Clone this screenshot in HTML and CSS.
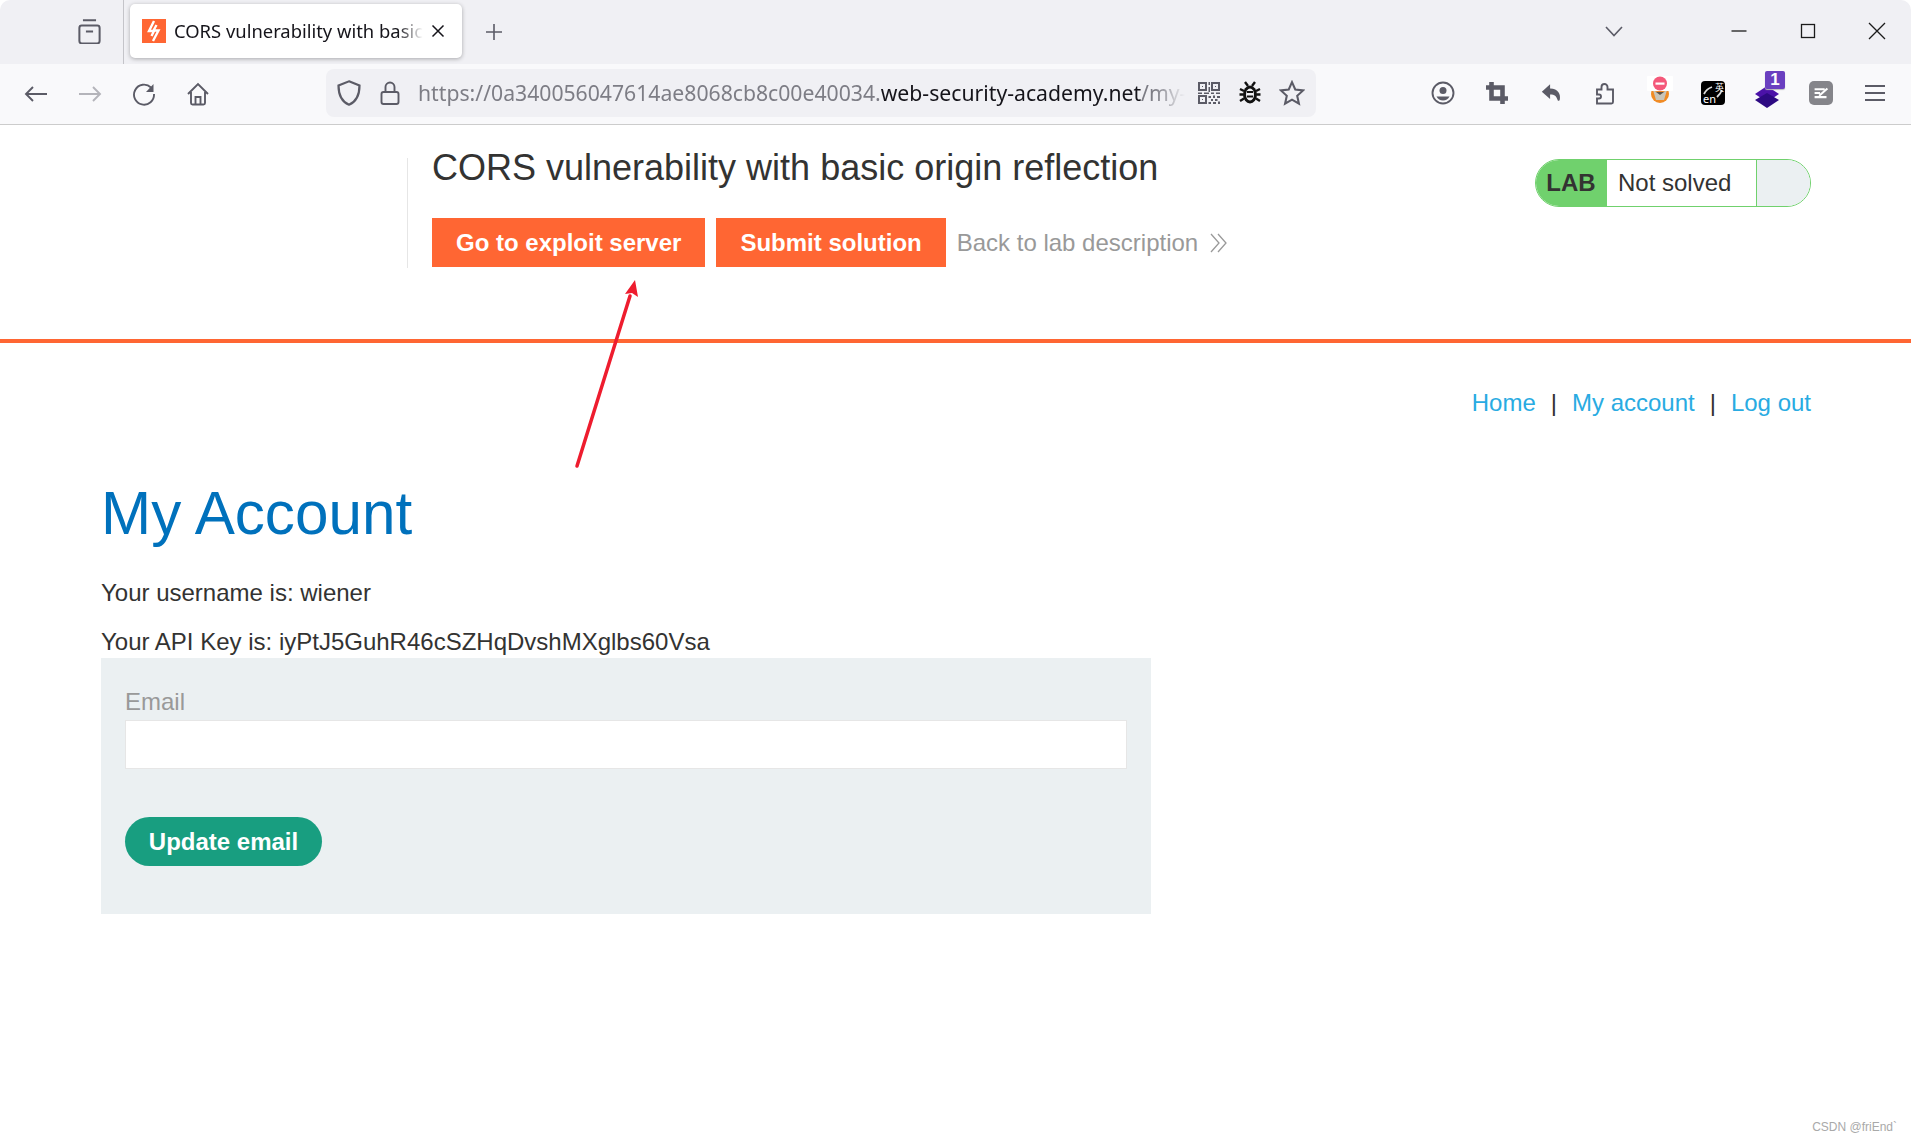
FILE: index.html
```html
<!DOCTYPE html>
<html lang="en">
<head>
<meta charset="utf-8">
<title>CORS vulnerability with basic origin reflection</title>
<link rel="stylesheet" href="styles.css">
</head>
<body>
<div class="window">
  <div class="tabbar">
    <svg class="ic archive" viewBox="2.5 1.5 19 21"><path d="M6.500 2.500h11M3.500 9a2 2 0 0 1 2-2h13a2 2 0 0 1 2 2v11a2 2 0 0 1-2 2h-13a2 2 0 0 1-2-2zM9 12h6"/></svg>
    <div class="tab-sep"></div>
    <div class="tab">
      <svg class="favicon" viewBox="0 0 24 24"><rect width="24" height="24" fill="#ff6633"/><path d="M12 2 L7 12 L12 12 L9.500 17 M14.500 6 L11.500 11.500 L16.500 11.500 L11 22" fill="none" stroke="#fff" stroke-width="2.400"/></svg>
      <span class="tab-title">CORS vulnerability with basic origin reflection</span>
      <svg class="ic tab-close" viewBox="0 0 14 14"><path d="M1.500 1.500l11 11M12.500 1.500l-11 11"/></svg>
    </div>
    <svg class="ic plus" viewBox="0 0 20 20"><path d="M10 2v16M2 10h16"/></svg>
    <svg class="ic chevron" viewBox="0 0 24 24"><path d="M4 8l8 8.500L20 8"/></svg>
    <svg class="ic win win-min" viewBox="0 0 24 24"><path d="M4.500 12h15"/></svg>
    <svg class="ic win" viewBox="0 0 24 24"><rect x="5.500" y="5.500" width="13" height="13"/></svg>
    <svg class="ic win" viewBox="0 0 24 24"><path d="M4 4l16 16M20 4L4 20"/></svg>
  </div>

  <div class="toolbar">
    <svg class="ic tool" viewBox="0 0 24 24"><path d="M23 12H2M9 5l-7 7 7 7"/></svg>
    <svg class="ic tool faded" viewBox="0 0 24 24"><path d="M1 12h21M15 5l7 7-7 7"/></svg>
    <svg class="ic tool" viewBox="0 0 24 24"><path d="M19 5.500A10 10 0 1 0 22 12"/><path class="solid" d="M21.500 2v8H14z"/></svg>
    <svg class="ic tool" viewBox="0 0 24 24"><path d="M2 12L12 2l10 10M5 10v11a1.500 1.500 0 0 0 1.500 1.500h11A1.500 1.500 0 0 0 19 21V10M9.500 22.500V15h5v7.500"/></svg>
    <div class="address">
      <svg class="ic shield" viewBox="0 0 24 24"><path d="M12 2l9 3.500c0 8-2 13.500-9 16.500-7-3-9-8.500-9-16.500z"/></svg>
      <svg class="ic lock" viewBox="0 0 24 24"><rect x="3.500" y="11" width="17" height="12" rx="2"/><path d="M7.500 11V6a4.500 4.500 0 0 1 9 0v5"/></svg>
      <span class="url"><span class="url-dim">https://0a340056047614ae8068cb8c00e40034.</span>web-security-academy.net<span class="url-dim">/my-account</span></span>
      <svg class="qr" viewBox="0 0 24 24"><path fill-rule="evenodd" d="M1 1h9v9H1zM3 3v5h5V3zM14 1h9v9h-9zM16 3v5h5V3zM1 14h9v9H1zM3 16v5h5v-5zM5 5h1v1H5zM18 5h1v1h-1zM5 18h1v1H5zM11.500 1h1.500v3h-1.500zM11.500 6h1.500v5h-1.500zM1 11.500h4V13H1zM7 11.500h5V13H7zM14 11.500h3V13h-3zM19 11.500h4V13h-4zM11.500 15H14v2h-2.500zM16 14.500h2v2.500h-2zM20 15h3v2h-3zM14 18h2v2h-2zM18 18h2.500v2H18zM11.500 21h2.500v2h-2.500zM16 21h3v2h-3zM21 20.500h2V23h-2z"/></svg>
      <svg class="bug" viewBox="0 0 24 24"><path d="M7 1l3 4M17 1l-3 4M2 8l4 2M22 8l-4 2M1.500 13.500h4M22.500 13.500h-4M2 20l4-2.500M22 20l-4-2.500"/><ellipse cx="12" cy="13.500" rx="7" ry="9" class="bug-body"/><ellipse cx="12" cy="13.500" rx="4" ry="6" class="bug-inner"/><path class="bug-lines" d="M9 11h6M9 15.500h6"/></svg>
      <svg class="ic star" viewBox="0 0 24 24"><path d="M12 2l3 6.800 7.300.8-5.500 5 1.600 7.300-6.400-3.800-6.400 3.800 1.600-7.300-5.500-5 7.300-.8z"/></svg>
    </div>
    <div class="tools-right">
      <svg class="ic tool" viewBox="0 0 24 24"><circle cx="12" cy="12" r="10.500"/><circle class="solid" cx="12" cy="9.500" r="3.500"/><path class="solid" d="M5.500 15.500h13A7.500 7.500 0 0 1 12 19.500a7.500 7.500 0 0 1-6.500-4z"/></svg>
      <svg class="tool crop" viewBox="0 0 24 24"><path d="M6 0v18h18M0 6h18v18" /></svg>
      <svg class="tool undo" viewBox="0 0 24 24"><path class="solid" d="M11 2.500L2 10.500l9 8V13.500c5 0 7 2 8 5.500.5 2 1.500 2 2.500.5 1.500-6-1.500-12.500-10.500-12.500z"/></svg>
      <svg class="ic tool" viewBox="0 0 24 24"><path d="M4 22.500h14.500a1.500 1.500 0 0 0 1.500-1.500V8.500h-5.500V6a3 3 0 0 0-6 0v2.500H4v5h2a2 2 0 0 1 0 4H4z"/></svg>
      <svg class="tool ext" viewBox="0 0 28 28">
        <circle cx="15" cy="18" r="9" fill="#f08b25"/><path d="M8 14l7 4 7-4-3 10h-8z" fill="#c9c4b8"/><path d="M11 16h8l-4 3z" fill="#5c5248"/>
        <rect x="2" y="0" width="26" height="15" rx="1" fill="#fff"/><circle cx="15" cy="7.500" r="7" fill="#f4587a"/><rect x="10.500" y="6.500" width="9" height="2.200" fill="#fff"/>
      </svg>
      <div class="tool en-ext">
        <svg class="en-swirl" viewBox="0 0 24 24"><path d="M3 13c2-4 5-6 8-7M21 9c-1 3-3 5-5 7"/></svg>
        <span class="en-han">英</span><span class="en-lat">en</span>
      </div>
      <div class="tool stack-ext">
        <svg viewBox="0 0 28 28"><path d="M14 6l12 8-12 8-12-8z" fill="#4b12a8"/><path d="M14 13l12 7-12 8-12-8z" fill="#2d0a82"/></svg>
        <span class="stack-badge">1</span>
      </div>
      <div class="tool note-ext">
        <svg viewBox="0 0 24 24"><path d="M5 8h11M5 12h6M5 16.500h13M10 15l9-8" /></svg>
      </div>
      <svg class="ic tool menu" viewBox="0 0 24 24"><path d="M2 5h20M2 12h20M2 19h20"/></svg>
    </div>
  </div>

  <main class="page">
    <header class="lab-header">
      <div class="lab-title-block">
        <h2 class="lab-title">CORS vulnerability with basic origin reflection</h2>
        <div class="lab-actions">
          <a class="btn-orange">Go to exploit server</a>
          <a class="btn-orange">Submit solution</a>
          <a class="back-link">Back to lab description
            <svg class="back-chevrons" viewBox="0 0 18 20"><path d="M1 1l8 9-8 9M8 1l8 9-8 9"/></svg>
          </a>
        </div>
      </div>
      <div class="lab-status">
        <span class="lab-tag">LAB</span>
        <span class="lab-state">Not solved</span>
        <span class="lab-icon"></span>
      </div>
    </header>

    <nav class="top-links">
      <a>Home</a><span class="pipe">|</span><a>My account</a><span class="pipe">|</span><a>Log out</a>
    </nav>

    <section class="account">
      <h1 class="account-title">My Account</h1>
      <p class="account-line">Your username is: wiener</p>
      <p class="account-line">Your API Key is: iyPtJ5GuhR46cSZHqDvshMXglbs60Vsa</p>
      <form class="email-form">
        <label class="email-label">Email</label>
        <input class="email-input" type="email">
        <button class="btn-green" type="button">Update email</button>
      </form>
    </section>

    <svg class="annot-arrow" viewBox="0 0 70 195"><path d="M7 191L60 21" stroke="#ee1c2e" stroke-width="3.500" stroke-linecap="round" fill="none"/><path d="M65 5L68 22 62 18 55 19z" fill="#ee1c2e"/></svg>
    <span class="watermark">CSDN @friEnd`</span>
  </main>
</div>
</body>
</html>
```

FILE: styles.css
```css
* { box-sizing: border-box; }
html, body { margin: 0; height: 100%; background: #fff; }
body { font-family: "Liberation Sans", Arial, sans-serif; color: #333332; overflow: hidden; }
a { text-decoration: none; }

.window { height: 100vh; display: flex; flex-direction: column; overflow: hidden; border-radius: 10px 10px 8px 0; }

.ic { fill: none; stroke: #5b5b66; stroke-width: 1.900; }
.ic .solid, .tool .solid { fill: #5b5b66; stroke: none; }

/* tab strip */
.tabbar { height: 64px; flex: none; background: #f0f0f4; display: flex; align-items: flex-start; padding: 0 22px 0 78px; }
.archive { width: 23px; height: 25px; margin-top: 19px; stroke-width: 1.700; }
.tab-sep { width: 1px; height: 64px; margin-left: 22px; background: #c4c4c9; }
.tab { width: 332px; height: 54px; margin: 4px 0 0 6px; padding: 0 17px 0 12px; background: #fff; border-radius: 5px; box-shadow: 0 1px 4px rgba(0,0,0,.3); display: flex; align-items: center; }
.favicon { width: 24px; height: 24px; flex: none; }
.tab-title { flex: 1; margin: 0 0 2px 8px; font: 18.400px "Noto Sans", sans-serif; color: #15141a; white-space: nowrap; overflow: hidden; -webkit-mask-image: linear-gradient(to right, #000 90%, transparent 100%); mask-image: linear-gradient(to right, #000 90%, transparent 100%); }
.tab-close { width: 14px; height: 14px; flex: none; margin-left: 8px; stroke: #15141a; stroke-width: 1.500; }
.plus { width: 20px; height: 20px; margin: 22px 0 0 22px; stroke-width: 1.600; }
.chevron { width: 24px; height: 24px; margin: 19px 0 0 auto; stroke-width: 1.600; }
.win { width: 24px; height: 24px; margin: 19px 0 0 45px; stroke: #1b1b1b; stroke-width: 1.300; }
.win-min { margin-left: 101px; }

/* toolbar */
.toolbar { height: 61px; flex: none; background: #f9f9fb; border-bottom: 1px solid #ccc; display: flex; align-items: center; padding: 0 22px 0 22px; gap: 26px; }
.tool { width: 28px; height: 28px; flex: none; }
.ic.tool { padding: 2px; }
.faded { stroke: #b4b4ba; }
.address { width: 990px; height: 48px; margin: 0 0 3px 88px; background: #f0f0f4; border-radius: 8px; display: flex; align-items: center; padding: 0 11px 0 9px; }
.shield { width: 28px; height: 28px; flex: none; }
.lock { width: 24px; height: 26px; flex: none; margin-left: 15px; }
.url { flex: 1; margin-left: 16px; font: 21.200px "Noto Sans", sans-serif; color: #15141a; white-space: nowrap; overflow: hidden; -webkit-mask-image: linear-gradient(to right, #000 96%, transparent 100%); mask-image: linear-gradient(to right, #000 96%, transparent 100%); }
.url-dim { color: #7d7d85; }
.qr { width: 24px; height: 24px; flex: none; fill: #5b5b66; margin-left: 12px; }
.bug { width: 24px; height: 26px; flex: none; margin-left: 17px; fill: none; stroke: #111; stroke-width: 2.400; }
.bug-body { fill: #111; stroke: none; }
.bug-inner { fill: #f0f0f4; stroke: none; }
.bug-lines { stroke: #111; stroke-width: 1.800; }
.star { width: 26px; height: 26px; flex: none; margin-left: 17px; }
.tools-right { margin-left: auto; display: flex; align-items: center; gap: 26px; margin-bottom: 2px; }
.crop { fill: none; stroke: #5b5b66; stroke-width: 5; padding: 3px; }
.undo { padding: 3px; }
.ext { overflow: visible; margin-top: -6px; }
.en-ext { position: relative; background: #000; border-radius: 4px; color: #fff; width: 24px; height: 24px; margin: 2px; }
.en-swirl { position: absolute; inset: 0; fill: none; stroke: #ddd; stroke-width: 1.800; }
.en-han { position: absolute; right: 1px; top: 1px; font: 9px "Noto Sans CJK SC", sans-serif; line-height: 11px; }
.en-lat { position: absolute; left: 2px; bottom: 1px; font: 11px "Noto Sans", sans-serif; line-height: 11px; }
.stack-ext { position: relative; margin-top: 2px; }
.stack-ext svg { width: 100%; height: 100%; display: block; overflow: visible; }
.stack-badge { position: absolute; right: -4px; top: -9px; width: 20px; height: 18px; background: #6a3fc0; color: #fff; border-radius: 2px; font: bold 17px/18px "Liberation Sans", sans-serif; text-align: center; box-shadow: 0 1px 1px #bbb; }
.note-ext { background: #85858a; border-radius: 5px; padding: 1px; width: 24px; height: 24px; margin: 2px; }
.note-ext svg { display: block; width: 100%; height: 100%; fill: none; stroke: #fff; stroke-width: 2.200; }
.menu { padding: 2px; }

/* page */
.page { position: relative; flex: 1; background: #fff; }
.lab-header { height: 218px; border-bottom: 4px solid #ff6633; display: flex; justify-content: space-between; align-items: flex-start; padding: 33px 100px 0 407px; }
.lab-title-block { height: 110px; border-left: 1px solid #e6e6e6; padding-left: 24px; }
.lab-title { margin: -13px 0 0; font-size: 36px; line-height: 46px; font-weight: 400; color: #333332; }
.lab-actions { display: flex; align-items: center; margin-top: 27px; }
.btn-orange { height: 49px; padding: 0 24px; background: #ff6633; color: #fff; font-size: 24px; font-weight: 700; line-height: 50px; margin-right: 11px; }
.back-link { color: #999; font-size: 24px; display: flex; align-items: center; padding-top: 1px; }
.back-chevrons { width: 18px; height: 20px; margin-left: 12px; fill: none; stroke: #999; stroke-width: 1.300; }
.lab-status { width: 276px; height: 48px; margin-top: 1px; border: 1px solid #70d16d; border-radius: 24px; overflow: hidden; display: flex; align-items: stretch; font-size: 24px; line-height: 46px; }
.lab-tag { width: 71px; background: #70d16d; font-weight: 700; text-align: center; padding-right: 1px; }
.lab-state { width: 150px; padding-left: 11px; background: #fff; border-right: 1px solid #70d16d; }
.lab-icon { flex: 1; background: #ebf0f2; }

.top-links { display: flex; justify-content: flex-end; padding: 45px 100px 0; font-size: 24px; line-height: 30px; }
.top-links a { color: #29abe2; }
.pipe { margin: 0 15px; color: #333332; }

.account { padding: 0 0 0 101px; }
.account-title { margin: 61px 0 0; font-size: 60.200px; line-height: 70px; font-weight: 400; color: #0071bc; }
.account-line { margin: 0; font-size: 24px; line-height: 30px; color: #333332; }
.account-title + .account-line { margin-top: 29px; }
.account-line + .account-line { margin-top: 19px; }
.email-form { width: 1050px; height: 256px; margin-top: 1px; background: #ebf0f2; padding: 29px 24px 0; }
.email-label { display: block; font-size: 24px; line-height: 30px; color: #999; }
.email-input { display: block; width: 100%; height: 49px; margin-top: 3px; background: #fff; border: 1px solid #e6e6e6; padding: 0; }
.btn-green { display: block; width: 197px; height: 49px; margin-top: 48px; border: 0; border-radius: 25px; background: #189e80; color: #fff; font: 700 24px "Liberation Sans", sans-serif; }

.annot-arrow { position: absolute; left: 570px; top: 150px; width: 70px; height: 195px; overflow: visible; }
.watermark { position: absolute; right: 14px; bottom: 6px; font-size: 12px; color: #a9a9a9; }
```
